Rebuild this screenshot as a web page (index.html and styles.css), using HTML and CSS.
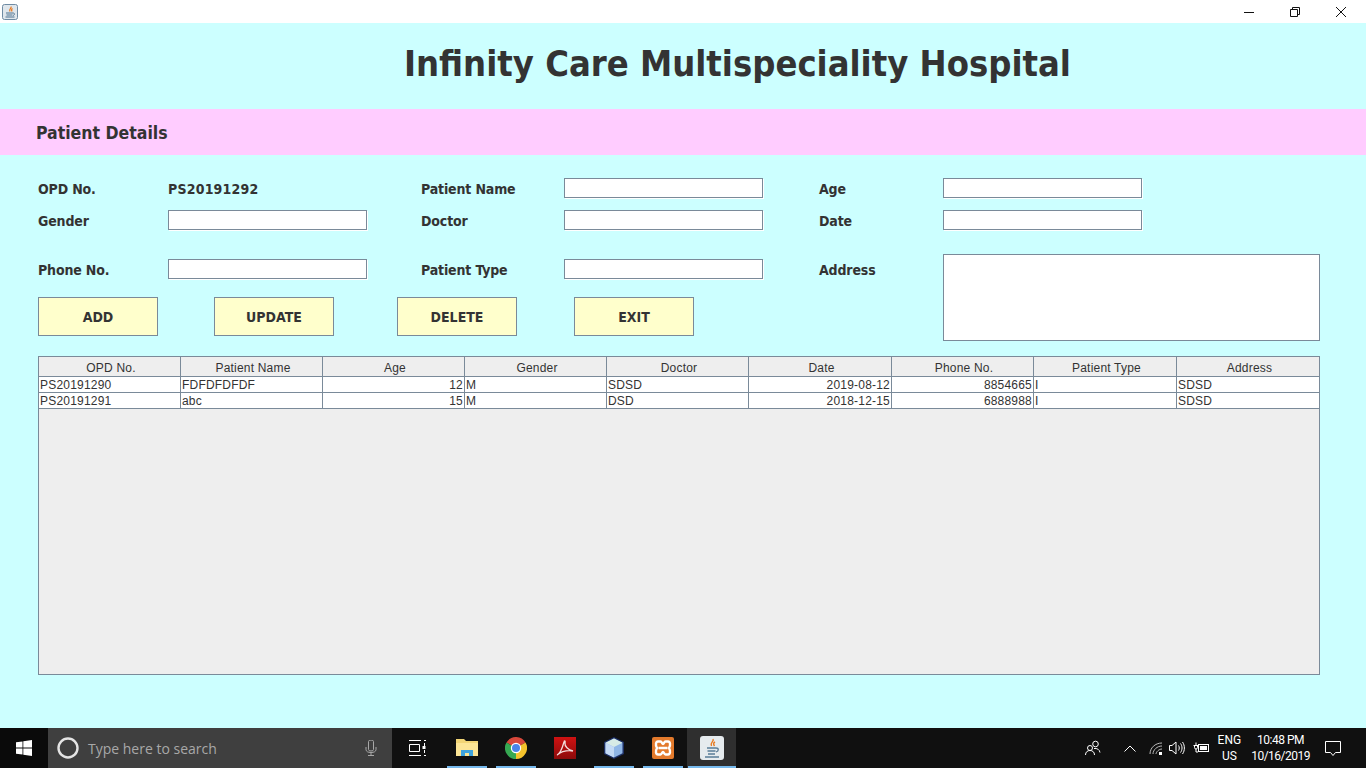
FILE: index.html
```html
<!DOCTYPE html>
<html lang="en">
<head>
    <meta charset="UTF-8">
    <meta name="viewport" content="width=device-width, initial-scale=1.0">
    <title>Infinity Care Multispeciality Hospital</title>
    <link rel="stylesheet" href="styles.css">
</head>
<body>
    <div class="titlebar">
        <svg class="app-icon" width="16" height="16" viewBox="0 0 16 16">
            <rect x="0.5" y="0.5" width="15" height="15" rx="2" fill="#dfe6ec" stroke="#6f8ba3"/>
            <path d="M9 2.500c1 1.500-2.500 2.500-1 5M10.500 4.500c-1.500.8-1 1.800-.5 3" fill="none" stroke="#e8791e" stroke-width="1.200"/>
            <path d="M4 9h7M4.500 11h6M3.500 13h9M11 9c2 0 2 2 0 2.500" fill="none" stroke="#4f7390" stroke-width="1"/>
        </svg>
        <div class="win-btns">
            <svg class="win-btn" width="12" height="12" viewBox="0 0 12 12"><path d="M1 6.500h10" stroke="#111" fill="none"/></svg>
            <svg class="win-btn" width="12" height="12" viewBox="0 0 12 12"><path d="M1.500 3.500h7v7h-7zM3.500 3.500v-2h7v7h-2" stroke="#111" fill="none"/></svg>
            <svg class="win-btn" width="12" height="12" viewBox="0 0 12 12"><path d="M1 1l10 10M11 1L1 11" stroke="#111" fill="none"/></svg>
        </div>
    </div>

    <div class="main">
        <h1>Infinity Care Multispeciality Hospital</h1>
        <h2>Patient Details</h2>

        <div class="form">
            <label class="r1 c1">OPD No.</label>
            <span class="r1 c2 field-label">PS20191292</span>
            <label class="r1 c3">Patient Name</label>
            <input class="r1 c4" type="text">
            <label class="r1 c5">Age</label>
            <input class="r1 c6" type="text">

            <label class="r2 c1">Gender</label>
            <input class="r2 c2" type="text">
            <label class="r2 c3">Doctor</label>
            <input class="r2 c4" type="text">
            <label class="r2 c5">Date</label>
            <input class="r2 c6" type="text">

            <label class="r3 c1">Phone No.</label>
            <input class="r3 c2" type="text">
            <label class="r3 c3">Patient Type</label>
            <input class="r3 c4" type="text">
            <label class="r3 c5">Address</label>
            <textarea class="address"></textarea>

            <div class="buttons">
                <button>ADD</button>
                <button>UPDATE</button>
                <button class="delete-btn">DELETE</button>
                <button class="exit-btn">EXIT</button>
            </div>
        </div>

        <div class="table-wrap">
            <table>
                <thead>
                    <tr>
                        <th>OPD No.</th><th>Patient Name</th><th>Age</th><th>Gender</th><th>Doctor</th><th>Date</th><th>Phone No.</th><th>Patient Type</th><th>Address</th>
                    </tr>
                </thead>
                <tbody>
                    <tr>
                        <td>PS20191290</td><td>FDFDFDFDF</td><td class="num">12</td><td>M</td><td>SDSD</td><td class="num">2019-08-12</td><td class="num">8854665</td><td>I</td><td>SDSD</td>
                    </tr>
                    <tr>
                        <td>PS20191291</td><td>abc</td><td class="num">15</td><td>M</td><td>DSD</td><td class="num">2018-12-15</td><td class="num">6888988</td><td>I</td><td>SDSD</td>
                    </tr>
                </tbody>
            </table>
        </div>
    </div>

    <div class="taskbar">
        <div class="start">
            <svg width="16" height="16" viewBox="0 0 16 16"><path d="M0 2.300l6.500-.9v6.200H0zM7.300 1.300L16 0v7.600H7.300zM0 8.400h6.500v6.200L0 13.700zM7.300 8.400H16V16l-8.700-1.300z" fill="#fff"/></svg>
        </div>
        <div class="search">
            <svg width="22" height="22" viewBox="0 0 22 22"><circle cx="11" cy="11" r="9.500" fill="none" stroke="#e4e4e4" stroke-width="2.400"/></svg>
            <span class="search-text">Type here to search</span>
            <svg class="mic" width="12" height="16" viewBox="0 0 12 16"><path d="M3.500 1.500a2.500 1.500 0 0 1 5 0v8a2.500 1.500 0 0 1-5 0zM1 7v2.500C1 11.500 3 12.500 6 12.500s5-1 5-3V7M6 12.500v3M3 15.500h6" fill="none" stroke="#a8a8a8"/></svg>
        </div>
        <div class="task-icon task-view">
            <svg width="17" height="16" viewBox="0 0 17 16"><path d="M0 .5h12M0 15.500h12M.5 4.500h10v7H.5zM15 .5h2M15 15.500h2M15.500 3v3M15.500 10v3" fill="none" stroke="#fff"/><rect x="13.500" y="6" width="3" height="3" fill="#fff"/></svg>
        </div>
        <div class="task-icon open">
            <svg width="22" height="20" viewBox="0 0 22 20"><path d="M0 1h8l2 2h12v14H0z" fill="#f2d576"/><path d="M0 5h22v13H0z" fill="#fce596"/><path d="M5 18v-6h12v6h-4v-3H9v3z" fill="#3ea3dd"/></svg>
        </div>
        <div class="task-icon open">
            <svg width="22" height="22" viewBox="0 0 22 22">
                <path d="M11 11L1.470 5.500A11 11 0 0 1 20.530 5.500z" fill="#d9483b"/>
                <path d="M11 11L20.530 5.500A11 11 0 0 1 11 22z" fill="#f5c32c"/>
                <path d="M11 11L11 22A11 11 0 0 1 1.470 5.500z" fill="#36a852"/>
                <circle cx="11" cy="11" r="5.200" fill="#fff"/>
                <circle cx="11" cy="11" r="4" fill="#4a84e8"/>
            </svg>
        </div>
        <div class="task-icon">
            <svg width="22" height="22" viewBox="0 0 22 22">
                <defs><linearGradient id="pdf-red" x1="0" y1="0" x2="0" y2="1"><stop offset="0" stop-color="#d01212"/><stop offset="1" stop-color="#8c0b0b"/></linearGradient></defs>
                <rect width="22" height="22" fill="url(#pdf-red)"/>
                <path d="M3 18c3-1 5-6 7-13 .5-2 1.500-1 1 1-.5 3 3 7 8 8-4-1-10 0-13 2-1.500 1-2.500 2-3 2z" fill="none" stroke="#f3dcdc" stroke-width="1.300"/>
            </svg>
        </div>
        <div class="task-icon open">
            <svg width="24" height="24" viewBox="0 0 24 24"><path d="M12 1l10 5v12l-10 5-10-5V6z" fill="#1d2f63"/><path d="M12 2.500l8.500 4.200v10.600L12 21.500l-8.500-4.200V6.700z" fill="#8fb6e6"/><path d="M12 2.500l8.500 4.200L12 11 3.500 6.700z" fill="#d7ebe6"/><path d="M12 11v10.500l-8.500-4.200V6.700z" fill="#c3daf5"/></svg>
        </div>
        <div class="task-icon open">
            <svg width="24" height="24" viewBox="0 0 24 24"><rect x="1" y="1" width="22" height="22" rx="2" fill="#e37a2c"/><path d="M7 5.500h2.500c1.500 0 1.500 2.500 2.500 2.500s1-2.500 2.500-2.500H17c2 0 3 3 1 6.500 2 3.500 1 6.500-1 6.500h-2.500c-1.500 0-1.500-2.500-2.500-2.500s-1 2.500-2.500 2.500H7c-2 0-3-3-1-6.500-2-3.500-1-6.500 1-6.500zM7.500 12h9" fill="none" stroke="#fff" stroke-width="2.400"/></svg>
        </div>
        <div class="task-icon open active">
            <svg width="24" height="24" viewBox="0 0 24 24"><rect width="24" height="24" rx="3" fill="#e6ebee"/><path d="M13 3c1.500 2.500-3.500 3.500-1.500 7M15 6c-2 1-1.500 2.500-.5 4" fill="none" stroke="#e8791e" stroke-width="1.400"/><path d="M7 12h9M7.500 15h8M8 18h7M5 21h14M16 12c3 0 3 3 0 4" fill="none" stroke="#5a7d98" stroke-width="1.300"/></svg>
        </div>

        <div class="tray">
            <svg class="people" width="16" height="16" viewBox="0 0 16 16"><circle cx="10.500" cy="4" r="2.800" fill="none" stroke="#fff"/><circle cx="5" cy="8" r="2.500" fill="none" stroke="#fff"/><path d="M.5 15c0-3 2-4.500 4.500-4.500S9.500 12 9.500 15M9 8.500c3-.5 5.500 1 6 4" fill="none" stroke="#fff"/></svg>
            <svg class="chevron" width="12" height="7" viewBox="0 0 12 7"><path d="M.5 6.500L6 1l5.500 5.500" fill="none" stroke="#fff"/></svg>
            <svg class="wifi" width="14" height="13" viewBox="0 0 14 13"><path d="M1 12C1 6 6 1 13 1M4 12c0-4 4-8 9-8M7 12c0-2 3-5 6-5" fill="none" stroke="#bbb"/><rect x="10" y="10" width="3" height="3" fill="#fff"/></svg>
            <svg class="volume" width="16" height="14" viewBox="0 0 16 14"><path d="M.5 4.500h2.500L7 1v12L3 9.500H.5zM9.500 4.500c1 1.500 1 3.500 0 5M11.500 2.500c2 2.500 2 6.500 0 9M13.500 1c2.500 3.500 2.500 8.500 0 12" fill="none" stroke="#fff"/></svg>
            <svg class="battery" width="16" height="12" viewBox="0 0 16 12"><path d="M.5 3.500h5M3 .5v3M1.500 3.500v2a1.500 1.500 0 0 0 3 0v-2M3 7v3h2" fill="none" stroke="#fff"/><rect x="5.500" y="2.500" width="10" height="7" fill="none" stroke="#fff"/><rect x="7" y="4" width="7" height="4" fill="#fff"/></svg>
            <div class="lang"><span>ENG</span><span>US</span></div>
            <div class="clock"><span>10:48 PM</span><span>10/16/2019</span></div>
            <svg class="notify" width="16" height="15" viewBox="0 0 16 15"><path d="M.5.500h15v11h-5l-2.500 3-2.500-3h-5z" fill="none" stroke="#fff"/></svg>
        </div>
    </div>
</body>
</html>
```

FILE: styles.css
```css
* {
    box-sizing: border-box;
}
body {
    margin: 0;
    width: 1366px;
    height: 768px;
    overflow: hidden;
    display: flex;
    flex-direction: column;
    font-family: "DejaVu Sans Condensed", "DejaVu Sans", sans-serif;
    color: #333;
}
.titlebar {
    height: 23px;
    background: #fff;
    display: flex;
    align-items: center;
    justify-content: space-between;
    padding-left: 2px;
}
.win-btns {
    display: flex;
    padding-right: 19px;
    gap: 34px;
    height: 21px;
    align-items: center;
}
.main {
    flex: 1;
    background: #ccffff;
}
h1 {
    margin: 0;
    height: 86px;
    padding: 20px 0 0 404px;
    font-size: 36px;
    line-height: 42px;
    font-weight: bold;
}
h2 {
    margin: 0;
    height: 46px;
    background: #ffccff;
    padding: 1px 0 0 36px;
    font-size: 17.5px;
    line-height: 46px;
    font-weight: bold;
}
.form {
    display: grid;
    grid-template-columns: 130px 199px 54px 143px 199px 56px 124px 377px;
    grid-template-rows: 20px 12px 20px 24px 30px 13px 44px;
    padding: 23px 0 0 38px;
    font-size: 14px;
    font-weight: bold;
    height: 201px;
}
.form label, .field-label {
    align-self: center;
    padding-top: 2px;
}
.form label {
    letter-spacing: -0.15px;
}
.field-label {
    letter-spacing: 0.2px;
}
.form input {
    height: 20px;
    align-self: center;
}
.r1 { grid-row: 1; }
.r2 { grid-row: 3; }
.r3 { grid-row: 5; }
.c1 { grid-column: 1; }
.c2 { grid-column: 2; }
.c3 { grid-column: 4; }
.c4 { grid-column: 5; }
.c5 { grid-column: 7; }
.c6 { grid-column: 8; }
input, .address {
    display: block;
    border: 1px solid #7a8a99;
    background: #fff;
    box-shadow: 1px 1px 0 #fff;
    margin: 0;
    padding: 0;
    width: 199px;
}
.address {
    grid-column: 8;
    grid-row: 5 / 8;
    width: 377px;
    height: 87px;
    resize: none;
    box-shadow: none;
}
.buttons {
    grid-column: 1 / 7;
    grid-row: 7;
    display: flex;
    gap: 56px;
    align-items: flex-start;
}
.buttons button {
    width: 120px;
    height: 39px;
    border: 1px solid #7a8a99;
    background: #ffffcc;
    font-family: inherit;
    font-size: 14px;
    font-weight: bold;
    color: #333;
    padding: 0;
    margin: 0;
}
.buttons .delete-btn {
    margin-left: 7px;
}
.buttons .exit-btn {
    margin-left: 1px;
}
.table-wrap {
    margin-left: 38px;
    width: 1282px;
    height: 319px;
    background: #eeeeee;
    border: 1px solid #7a8a99;
}
table {
    width: 1281px;
    table-layout: fixed;
    border-collapse: separate;
    border-spacing: 0;
    font-family: "Liberation Sans", Arial, sans-serif;
    font-size: 12px;
    letter-spacing: 0.2px;
}
th {
    width: 142px;
    height: 20px;
    background: #eeeeee;
    font-weight: normal;
    padding: 3px 0 0 3px;
    border-right: 1px solid #7a8a99;
    border-bottom: 1px solid #7a8a99;
}
th:nth-child(6), th:nth-child(8), th:nth-child(9) {
    width: 143px;
}
td {
    height: 16px;
    background: #fff;
    padding: 1px 1px 0;
    border-right: 1px solid #7a8a99;
    border-bottom: 1px solid #7a8a99;
    line-height: 14px;
    white-space: nowrap;
}
.num {
    text-align: right;
}
.taskbar {
    height: 40px;
    background: #101010;
    display: flex;
    align-items: center;
    color: #fff;
    font-family: "Roboto", sans-serif;
    font-size: 12px;
}
.start {
    width: 48px;
    height: 40px;
    background: #0a0a0a;
    display: flex;
    align-items: center;
    justify-content: center;
}
.search {
    width: 344px;
    height: 40px;
    background: #3f3f3f;
    display: flex;
    align-items: center;
    padding-left: 9px;
}
.search-text {
    margin-left: 9px;
    font-family: "Open Sans", sans-serif;
    font-size: 14px;
    color: #a8a8a8;
}
.mic {
    margin-left: auto;
    margin-right: 15px;
}
.task-icon {
    width: 49px;
    height: 40px;
    display: flex;
    align-items: center;
    justify-content: center;
    position: relative;
}
.task-view {
    width: 50px;
}
.open::after {
    content: "";
    position: absolute;
    left: 5px;
    right: 4px;
    bottom: 0;
    height: 2px;
    background: #76b9ed;
}
.active {
    background: #2f2f2f;
}
.active::after {
    left: 1px;
    right: 0;
}
.tray {
    margin-left: auto;
    display: flex;
    align-items: center;
    height: 40px;
}
.people { margin-right: 23px; }
.chevron { margin-right: 13px; }
.wifi { margin-right: 6px; }
.volume { margin-right: 8px; }
.battery { margin-right: 9px; }
.lang, .clock {
    display: flex;
    flex-direction: column;
    align-items: center;
    line-height: 16px;
}
.clock {
    margin-left: 10px;
    letter-spacing: -0.5px;
}
.notify {
    margin: 0 25px 0 15px;
}
```
